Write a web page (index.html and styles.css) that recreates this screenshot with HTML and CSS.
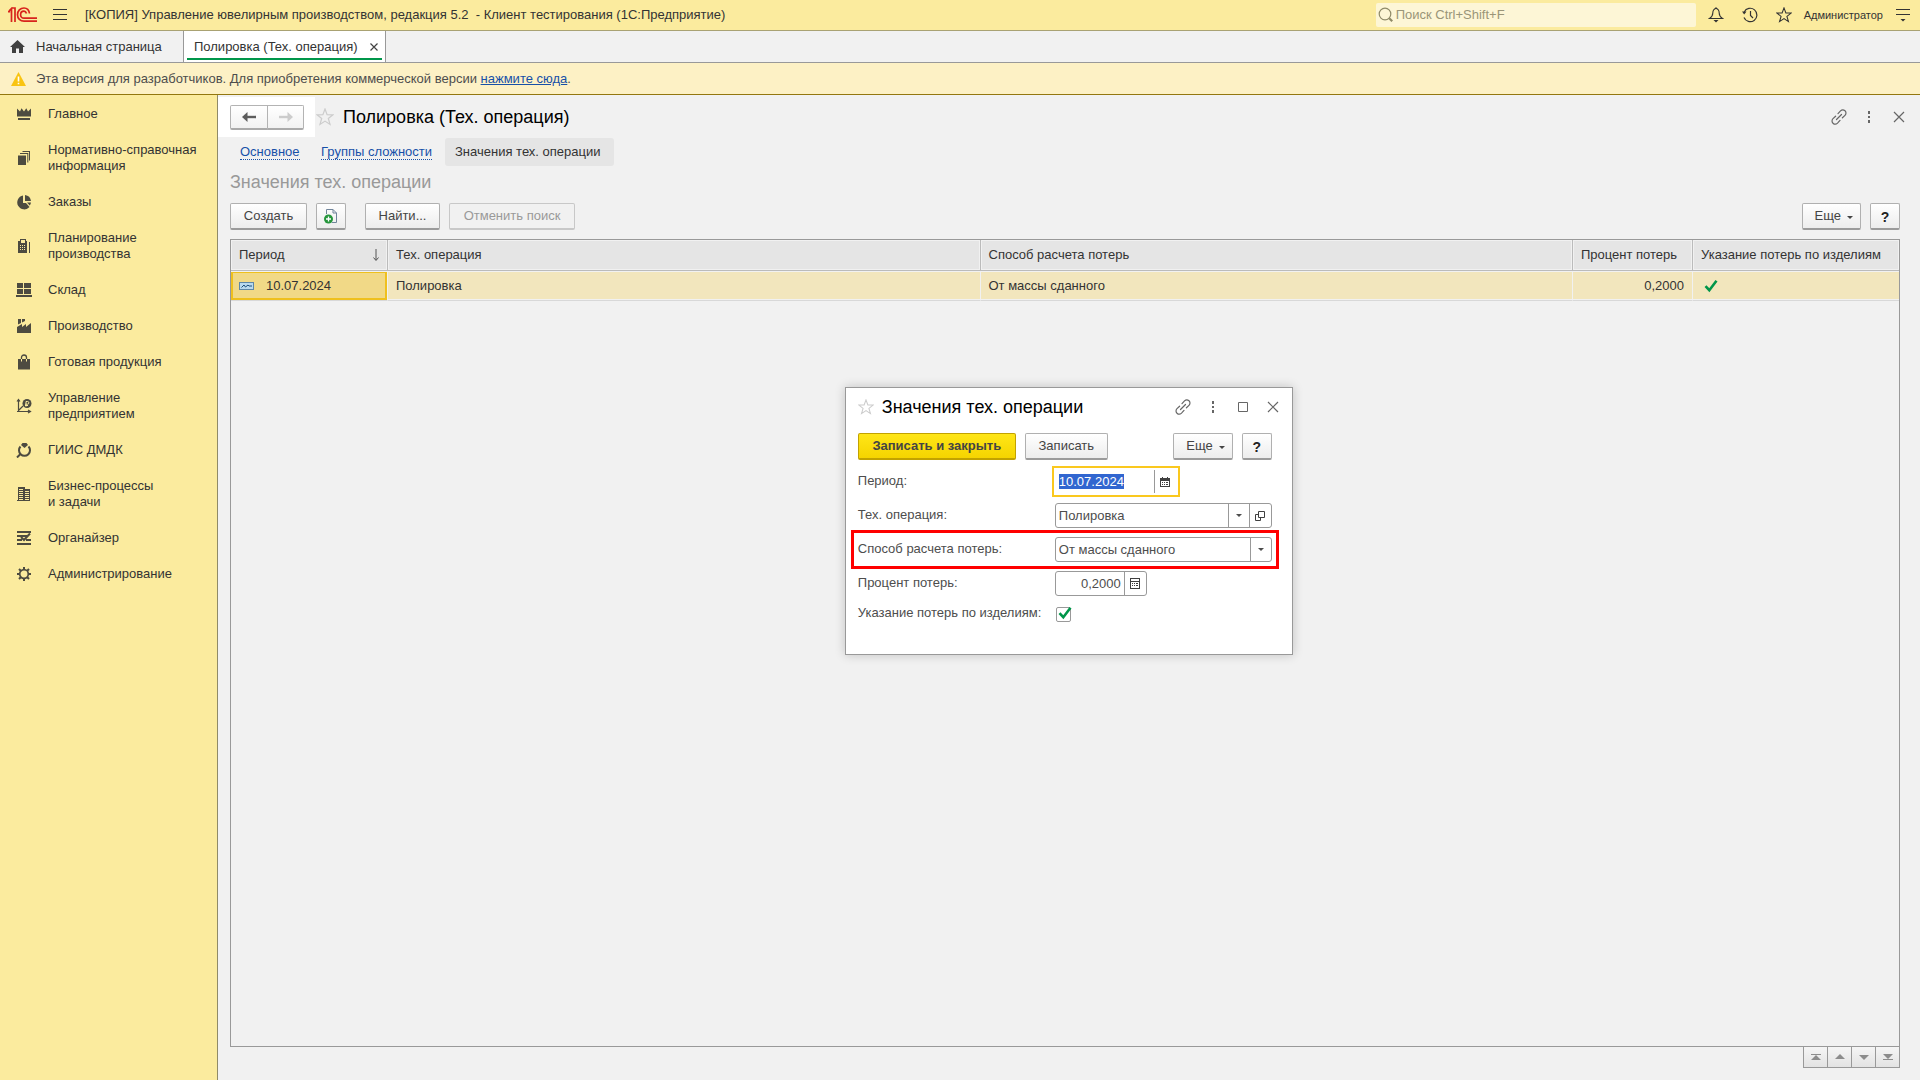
FILE: index.html
```html
<!DOCTYPE html>
<html lang="ru">
<head>
<meta charset="utf-8">
<title>Полировка (Тех. операция)</title>
<link rel="stylesheet" href="styles.css">
</head>
<body>
<svg class="sprite" aria-hidden="true">
  <symbol id="star" viewBox="0 0 18 18"><path d="M9 1l2.1 5.6 5.9.2-4.7 3.7 1.7 5.9L9 13.1 4 16.4l1.700-5.900L1 6.800l5.900-.2z" fill="none" stroke="currentColor" stroke-width="1.200"/></symbol>
  <symbol id="link" viewBox="0 0 16 16"><g fill="none" stroke="currentColor" stroke-width="1.200" stroke-linecap="round"><path d="M5.500 10.500l5-5M7 4.600l2.500-2.700c1.300-1.300 3.200-1.300 4.500-.1s1.300 3.200 0 4.500l-2.600 2.500M9 11.400l-2.500 2.700c-1.300 1.300-3.200 1.300-4.500.1s-1.300-3.200 0-4.500l2.600-2.500"/></g></symbol>
  <symbol id="dots" viewBox="0 0 16 16"><path d="M7 2h2v3H7zM7 7h2v2H7zM7 11h2v3H7z" fill="currentColor"/></symbol>
  <symbol id="cross" viewBox="0 0 16 16"><path d="M3 3l10 10M13 3L3 13" fill="none" stroke="currentColor" stroke-width="1.200"/></symbol>
  <symbol id="caret" viewBox="0 0 6 4"><path d="M0 0h6L3 3z" fill="currentColor"/></symbol>
  <symbol id="check" viewBox="0 0 14 14"><path d="M1.500 7.200l3.800 4L12.500 1.800" fill="none" stroke="#00964a" stroke-width="2.600"/></symbol>
</svg>

<header class="topbar">
  <svg class="logo" viewBox="0 0 30 16" width="30" height="16" aria-label="1С"><g fill="none" stroke="#d8231c" stroke-width="1.700"><path d="M0 4.700h2.200M1.200 3.800L3.500 1.500V15M7 15V1H4"/><path d="M21.500 6.500C21 3 18.800 1 16 1c-3.700 0-6.500 3-6.500 6.700s2.800 6.500 6.500 6.500h13"/><path d="M18.500 6.500C18 5 17.200 4.100 16 4.100c-2 0-3.400 1.600-3.400 3.600S14 11.200 16 11.200h13"/></g></svg>
  <button class="plain menu" aria-label="Меню"><svg viewBox="0 0 14 12" width="14" height="12"><path d="M0 .5h14M0 5.500h14M0 10.500h14" stroke="#333" fill="none"/></svg></button>
  <span class="app-title">[КОПИЯ] Управление ювелирным производством, редакция 5.2 &nbsp;- Клиент тестирования (1С:Предприятие)</span>
  <label class="search"><svg viewBox="0 0 16 16" width="16" height="16"><circle cx="7" cy="7" r="5.800" fill="none" stroke="#8f8a68" stroke-width="1.200"/><path d="M11.200 11.200l3 3" stroke="#8f8a68" stroke-width="2.200"/></svg><input type="search" placeholder="Поиск Ctrl+Shift+F" aria-label="Поиск"></label>
  <div class="tools">
    <button class="plain" aria-label="Уведомления"><svg viewBox="0 0 16 16" width="16" height="16"><path d="M8 1.200C5.800 2 4.800 3.800 4.800 6c0 2.800-1 4-3.300 5.500h13C12.200 10 11.200 8.800 11.200 6c0-2.200-1-4-3.200-4.800z" fill="none" stroke="#333" stroke-width="1.100"/><path d="M8 .3v1.500" stroke="#333"/><path d="M5.500 13h5L8 15.500z" fill="#333"/></svg></button>
    <button class="plain" aria-label="История"><svg viewBox="0 0 16 16" width="16" height="16"><path d="M2.200 5A6.700 6.700 0 1 1 2 10.500M8.500 4v4.500l2.500 2.500" fill="none" stroke="#333" stroke-width="1.200"/><path d="M0 4.500h4.500L2.200 7.500z" fill="#333"/></svg></button>
    <button class="plain" aria-label="Избранное"><svg width="16" height="16"><use href="#star"/></svg></button>
  </div>
  <button class="plain user">Администратор</button>
  <button class="plain" aria-label="Сервис и настройки"><svg viewBox="0 0 14 14" width="14" height="14"><path d="M0 1.500h14M0 6.500h14" stroke="#333"/><path d="M4.500 11h5L7 13.500z" fill="#333"/></svg></button>
</header>

<nav class="tabs" aria-label="Открытые окна">
  <a class="tab home" href="#"><svg viewBox="0 0 15 13" width="15" height="13"><path d="M7.500 0L15 7H13v6H9V8.500H6V13H2V7H0z" fill="#404040"/></svg>Начальная страница</a>
  <div class="tab active"><a href="#">Полировка (Тех. операция)</a><button class="plain" aria-label="Закрыть"><svg viewBox="0 0 8 8" width="8" height="8"><path d="M.5.5l7 7M7.500.5l-7 7" fill="none" stroke="#444" stroke-width="1.200"/></svg></button></div>
</nav>

<div class="notice">
  <svg viewBox="0 0 15 14" width="15" height="14"><path d="M7.500 0L15 14H0z" fill="#f9c412"/><path d="M7.500 4.500v5M7.500 10.700v1.600" stroke="#fff" stroke-width="1.600"/></svg>
  <p>Эта версия для разработчиков. Для приобретения коммерческой версии <a href="#">нажмите сюда</a>.</p>
</div>

<div class="workspace">
  <nav class="sidebar" aria-label="Разделы">
    <a href="#"><svg viewBox="0 0 16 16"><path d="M1 2.500l3 3 1.500-3.200L8 5.500l2.300-3.200L12 5.500l3-3V10.500H1zM2 12h12v2H2z"/></svg>Главное</a>
    <a href="#"><svg viewBox="0 0 16 16"><path d="M2 5.500h8V15H2zM4 3h8.300v9.500h-1V4H4zM6.500 1H14v9.500h-1V2H6.500z"/></svg><span>Нормативно-справочная<br>информация</span></a>
    <a href="#"><svg viewBox="0 0 16 16"><path d="M7 1.500V9h3l3.500 4A7 7 0 1 1 7 1.500zM9 1a7 7 0 0 1 6 6H9zM11 8.500h4a7 7 0 0 1-1.200 3z"/></svg>Заказы</a>
    <a href="#"><svg viewBox="0 0 16 16"><path fill-rule="evenodd" d="M3 3h1V1h6v2h1v12H2V3zM5 2v3h4V2zM4 7v1h1V7zm2 0v1h1V7zm2 0v1h1V7zM4 9v1h1V9zm2 0v1h1V9zm2 0v1h1V9zm-4 2v1h1v-1zm2 0v1h1v-1zm2 0v1h1v-1zM13 4h1v11h-1z"/></svg><span>Планирование<br>производства</span></a>
    <a href="#"><svg viewBox="0 0 16 16"><path d="M1 1h6v5H1zM8 1h7v5H8zM1 7h6v5H1zM8 7h7v5H8zM0 13h16v2H0z"/></svg>Склад</a>
    <a href="#"><svg viewBox="0 0 16 16"><path d="M2 1h3v4L2 6.500zM6 1h3v2L6 4.500zM1 9l5-3v3l4-3v3l5-4v10H1z"/></svg>Производство</a>
    <a href="#"><svg viewBox="0 0 16 16"><path d="M2 5h12v10.500H2z"/><path d="M5.500 8V3.500C5.500 2 6.500 1 8 1s2.500 1 2.500 2.500V8" fill="none" stroke="#4d4b40" stroke-width="1.300"/><path d="M5.500 5v2.500M10.500 5v2.500" stroke="#fbeb9e" stroke-width="1"/></svg>Готовая продукция</a>
    <a href="#"><svg viewBox="0 0 16 16"><path d="M2.500 14V2M1 3.500L2.500 1.500 4 3.500M1 13.500h13M12 12l2.500 1.500L12 15M3 12l4-4" fill="none" stroke="#4d4b40" stroke-width="1.200"/><circle cx="11" cy="5.500" r="4.500"/><path d="M10 8.500V3.500h1.500a1.300 1.300 0 0 1 0 2.700H9M9 7.500h3" stroke="#fbeb9e" fill="none"/></svg><span>Управление<br>предприятием</span></a>
    <a href="#"><svg viewBox="0 0 16 16"><path d="M5 3l1.500-2h4L12 3 8.500 6z"/><path d="M4.500 4.500a5.500 5.500 0 1 0 8 0M4.500 12L1 15.500" fill="none" stroke="#4d4b40" stroke-width="2"/></svg>ГИИС ДМДК</a>
    <a href="#"><svg viewBox="0 0 16 16"><path fill-rule="evenodd" d="M2 1h7v2h5v12H1v-1h1zM3 3v1h4V3zm0 2v1h4V5zm0 2v1h4V7zm0 2v1h4V9zm0 2v1h4v-1zm0 2v1h4v-1zM9 5v1h4V5zm0 2v1h4V7zm0 2v1h4V9zm0 2v1h4v-1zm0 2v1h4v-1z"/></svg><span>Бизнес-процессы<br>и задачи</span></a>
    <a href="#"><svg viewBox="0 0 16 16"><path d="M1 1h14v2H1zM1 5h10v2H1zM1 9h5v2H1zM10 9h5v2h-5zM1 13h14v2H1z"/><path d="M5 7l3 3 6-6.500" fill="none" stroke="#4d4b40" stroke-width="2"/></svg>Органайзер</a>
    <a href="#"><svg viewBox="0 0 16 16"><circle cx="8" cy="8" r="4.300" fill="none" stroke="#4d4b40" stroke-width="1.700"/><path d="M8 1v3M8 12v3M1 8h3M12 8h3M3 3l2 2M11 11l2 2M3 13l2-2M11 5l2-2" stroke="#4d4b40" stroke-width="2"/></svg>Администрирование</a>
  </nav>

  <main class="form">
    <div class="form-head">
      <div class="history">
        <button aria-label="Назад"><svg viewBox="0 0 14 10" width="14" height="10"><path d="M14 5H3" stroke="#5c5c5c" stroke-width="2.400"/><path d="M0 5l5.500-5v10z" fill="#5c5c5c"/></svg></button><button aria-label="Вперед" disabled><svg viewBox="0 0 14 10" width="14" height="10"><path d="M0 5h11" stroke="#ccc" stroke-width="2.400"/><path d="M14 5L8.500 0v10z" fill="#ccc"/></svg></button>
      </div>
      <button class="plain fav" aria-label="В избранное"><svg width="18" height="18"><use href="#star"/></svg></button>
      <h1>Полировка (Тех. операция)</h1>
      <div class="window-tools">
        <button class="plain" aria-label="Ссылка"><svg width="16" height="16"><use href="#link"/></svg></button>
        <button class="plain" aria-label="Действия"><svg width="16" height="16"><use href="#dots"/></svg></button>
        <button class="plain" aria-label="Закрыть"><svg width="16" height="16"><use href="#cross"/></svg></button>
      </div>
    </div>
    <div class="form-body">
      <nav class="sections" aria-label="Навигация формы">
        <a class="w-main" href="#"><span>Основное</span></a><a class="w-groups" href="#"><span>Группы сложности</span></a><a class="current" href="#">Значения тех. операции</a>
      </nav>
      <h2>Значения тех. операции</h2>
      <div class="commands">
        <button class="btn create">Создать</button>
        <button class="btn square" aria-label="Скопировать"><svg viewBox="0 0 16 16" width="16" height="16"><path d="M3.500 6V1.500H10L13.500 5v9.500H9M10 1.500V5h3.500" fill="none" stroke="#70849a"/><circle cx="5.500" cy="11" r="4.500" fill="#26963c"/><path d="M5.500 8.500v5M3 11h5" stroke="#fff" stroke-width="1.300"/></svg></button>
        <button class="btn find">Найти...</button>
        <button class="btn cancel" disabled>Отменить поиск</button>
        <button class="btn more">Еще<svg width="6" height="4"><use href="#caret"/></svg></button>
        <button class="btn square help">?</button>
      </div>
      <div class="list">
        <table>
          <colgroup><col class="c-date"><col><col><col class="c-rate"><col class="c-flag"></colgroup>
          <thead><tr>
            <th><div class="sorted">Период<svg viewBox="0 0 6 12" width="6" height="12"><path d="M3 0v11M.5 8.500L3 11.500l2.500-3" fill="none" stroke="#555"/></svg></div></th>
            <th>Тех. операция</th><th>Способ расчета потерь</th><th>Процент потерь</th><th>Указание потерь по изделиям</th>
          </tr></thead>
          <tbody><tr>
            <td class="cursor"><div class="record"><svg viewBox="0 0 15 8" width="15" height="8"><rect x=".5" y=".5" width="14" height="7" fill="#b9d9ee" stroke="#5e87a8"/><path d="M2.500 5.500L5 3l1.500 2L9 3l1 1h3" fill="none" stroke="#1c4f7c"/></svg>10.07.2024</div></td>
            <td>Полировка</td><td>От массы сданного</td><td class="num">0,2000</td><td><svg class="yes" width="14" height="14" aria-label="Да"><use href="#check"/></svg></td>
          </tr></tbody>
        </table>
      </div>
      <div class="pager">
        <button aria-label="В начало"><svg viewBox="0 0 10 6" width="10" height="6"><path d="M0 0h10v1H0zM5 1l5 5H0z"/></svg></button>
        <button aria-label="Вверх"><svg viewBox="0 0 10 6" width="10" height="6"><path d="M5 0l5 5H0z"/></svg></button>
        <button aria-label="Вниз"><svg viewBox="0 0 10 6" width="10" height="6"><path d="M0 1h10L5 6z"/></svg></button>
        <button aria-label="В конец"><svg viewBox="0 0 10 6" width="10" height="6"><path d="M0 0h10L5 5zM0 5h10v1H0z"/></svg></button>
      </div>
    </div>
  </main>
</div>

<section class="dialog" role="dialog" aria-labelledby="dialog-title">
  <div class="dialog-head">
    <button class="plain fav" aria-label="В избранное"><svg width="16" height="16"><use href="#star"/></svg></button>
    <h2 id="dialog-title">Значения тех. операции</h2>
    <div class="window-tools">
      <button class="plain" aria-label="Ссылка"><svg width="16" height="16"><use href="#link"/></svg></button>
      <button class="plain" aria-label="Действия"><svg width="16" height="16"><use href="#dots"/></svg></button>
      <button class="plain" aria-label="Развернуть"><svg viewBox="0 0 16 16" width="16" height="16"><path d="M3.500 3.500h9v9h-9z" fill="none" stroke="currentColor"/></svg></button>
      <button class="plain" aria-label="Закрыть"><svg width="16" height="16"><use href="#cross"/></svg></button>
    </div>
  </div>
  <div class="commands">
    <button class="btn primary">Записать и закрыть</button>
    <button class="btn save">Записать</button>
    <button class="btn more">Еще<svg width="6" height="4"><use href="#caret"/></svg></button>
    <button class="btn square help">?</button>
  </div>
  <form class="fields">
    <div class="row">
      <label for="period">Период:</label>
      <div class="field date"><input id="period" value="10.07.2024"><button type="button" aria-label="Календарь"><svg viewBox="0 0 10 10" width="10" height="10"><path fill-rule="evenodd" d="M0 1h2V0h1v1h4V0h1v1h2v9H0zM1 4v5h8V4z"/><path d="M2 5h1v1H2zM4 5h1v1H4zM6 5h2v1H6zM2 7h1v1H2zM4 7h1v1H4zM6 7h2v1H6z"/></svg></button></div>
    </div>
    <div class="row">
      <label for="operation">Тех. операция:</label>
      <div class="field"><div class="pick"><select id="operation"><option>Полировка</option></select><svg width="6" height="4"><use href="#caret"/></svg></div><button type="button" aria-label="Открыть"><svg viewBox="0 0 10 10" width="10" height="10"><path d="M3.500.5h6v6h-6zM3.500 3.500h-3v6h5v-3" fill="none" stroke="#404040"/></svg></button></div>
    </div>
    <div class="row marked">
      <label for="method">Способ расчета потерь:</label>
      <div class="field"><div class="pick"><select id="method"><option>От массы сданного</option></select><svg width="6" height="4"><use href="#caret"/></svg></div></div>
    </div>
    <div class="row">
      <label for="rate">Процент потерь:</label>
      <div class="field rate"><input id="rate" value="0,2000"><button type="button" aria-label="Калькулятор"><svg viewBox="0 0 10 11" width="10" height="11"><path fill-rule="evenodd" d="M0 0h10v11H0zM1 1v2h8V1zM1 4v6h8V4z"/><path d="M2 5h1v1H2zM4 5h1v1H4zM6 5h2v1H6zM2 7h1v1H2zM4 7h1v1H4zM6 7h2v1H6z"/></svg></button></div>
    </div>
    <div class="row short">
      <label for="by-item">Указание потерь по изделиям:</label>
      <div class="tick"><input type="checkbox" id="by-item" checked><svg width="14" height="14"><use href="#check"/></svg></div>
    </div>
  </form>
</section>
<script src="app.js"></script>
</body>
</html>
```
FILE: styles.css
```css
* { box-sizing: border-box; }
body {
  margin: 0;
  min-height: 100vh;
  display: flex;
  flex-direction: column;
  position: relative;
  background: #f1f1f1;
  color: #333;
  font: 13px/16px "Liberation Sans", Arial, sans-serif;
}
button, input, select { font: inherit; color: inherit; margin: 0; }
h1, h2, p { margin: 0; }
h1, h2 { font-size: 18px; line-height: 22px; font-weight: 400; color: #000; }
svg { display: block; flex: none; }
.sprite { position: absolute; width: 0; height: 0; }
.plain { display: flex; padding: 0; border: 0; background: none; }

.topbar {
  display: flex;
  align-items: center;
  height: 31px;
  padding: 0 10px 0 8px;
  background: #fbeb9e;
  border-bottom: 1px solid #a9a273;
}
.menu { margin: 0 18px 0 15px; }
.app-title { flex: 1; white-space: nowrap; }
.search {
  display: flex;
  align-items: center;
  width: 320px;
  height: 24px;
  padding: 0 2px;
  border-radius: 2px;
  background: #fdf6d6;
}
.search input { flex: 1; min-width: 0; padding: 0 2px; border: 0; background: none; outline: 0; }
.search input::placeholder { color: #9a9578; opacity: 1; }
.tools { display: flex; gap: 18px; margin: 0 12px; }
.user { font-size: 11px; margin-right: 13px; }

.tabs { display: flex; height: 32px; border-bottom: 1px solid #999; }
.tab { display: flex; align-items: center; color: #333; text-decoration: none; }
.tab a { color: inherit; text-decoration: none; }
.home { gap: 11px; min-width: 183px; padding: 0 10px; }
.active {
  justify-content: space-between;
  min-width: 203px;
  padding: 0 7px 0 10px;
  border: solid #999;
  border-width: 0 1px;
  background: linear-gradient(#00964a, #00964a) 3px 27px / calc(100% - 6px) 2px no-repeat #fff;
}

.notice {
  display: flex;
  align-items: center;
  gap: 10px;
  height: 32px;
  padding: 0 11px;
  background: #fdf1c5;
  border-bottom: 1px solid #93770f;
  color: #4d4d4d;
}
.notice a { color: #1750a8; }

.workspace { display: flex; flex: 1; }
.sidebar { flex: none; width: 218px; padding-top: 1px; background: #fbeb9e; border-right: 1px solid #8f8a68; }
.sidebar a {
  display: flex;
  align-items: center;
  gap: 16px;
  padding: 10px 16px;
  color: #333;
  text-decoration: none;
}
.sidebar svg { width: 16px; height: 16px; fill: #4d4b40; }

.form { display: flex; flex-direction: column; flex: 1; min-width: 0; padding-top: 2px; }
.form-head { display: flex; align-items: center; height: 40px; padding-right: 13px; }
.history { display: flex; align-items: center; height: 40px; padding: 0 11px 0 12px; background: #fff; }
.history button {
  display: grid;
  place-items: center;
  width: 38px;
  height: 25px;
  padding: 0;
  border: 1px solid #b3b3b3;
  border-bottom: 2px solid #aaa;
  border-radius: 2px 0 0 2px;
  background: linear-gradient(#fff, #f2f2f2);
}
.history button + button { width: 37px; margin-left: -1px; border-radius: 0 2px 2px 0; }
.fav { color: #ccc; margin: 0 9px 0 1px; }
.window-tools { display: flex; gap: 14px; margin-left: auto; color: #666; }

.form-body { display: flex; flex-direction: column; flex: 1; padding: 1px 20px 12px 12px; }
.sections { display: flex; }
.sections a { padding: 6px 10px; color: #1750a8; text-decoration: none; }
.sections span { border-bottom: 1px dotted #1750a8; }
.sections .w-main { min-width: 81px; }
.sections .w-groups { min-width: 134px; }
.sections .current { min-width: 169px; color: #333; background: #e5e5e5; border-radius: 3px; }
.form-body h2 { color: #999; margin: 5px 0 10px; }

.commands { display: flex; gap: 9px; }
.btn {
  height: 27px;
  padding: 0 8px;
  border: 1px solid #b0b0b0;
  border-bottom: 2px solid #9b9b9b;
  border-radius: 2px;
  background: linear-gradient(#fff, #ededed);
  color: #444;
  white-space: nowrap;
}
.btn:disabled { color: #999; background: #f1f1f1; border-color: #c8c8c8; }
.square { display: grid; place-items: center; width: 30px; padding: 0; }
.create { min-width: 77px; }
.find { min-width: 75px; margin-left: 10px; }
.cancel { min-width: 126px; }
.save { min-width: 83px; }
.more { display: flex; align-items: center; gap: 6px; margin-left: auto; padding: 0 7px 0 12px; }
.more svg { margin-top: 3px; }
.help { padding-top: 2px; font-size: 14px; font-weight: 700; color: #222; }
.primary { min-width: 158px; background: linear-gradient(#ffe617, #f5d400); border-color: #c2a200; color: #444; font-weight: 700; }

.list { flex: 1; margin-top: 9px; border: 1px solid #999; }
table { width: 100%; table-layout: fixed; border-collapse: separate; border-spacing: 0; }
.c-date { width: 157px; }
.c-rate { width: 120px; }
.c-flag { width: 206px; }
th, td { padding: 0 8px; text-align: left; font-weight: 400; white-space: nowrap; }
th {
  height: 31px;
  background: #e5e5e5;
  border: solid #bbb;
  border-width: 0 1px 1px 0;
  box-shadow: inset 0 0 0 1px #f1f1f1;
}
td {
  height: 30px;
  background: #f2e6bd;
  border: solid #f1f1f1;
  border-width: 0 1px 1px 0;
  border-bottom-color: #d8d8d8;
  box-shadow: inset 0 1px #f1f1f1, inset 0 -1px #f1f1f1;
}
th:last-child, td:last-child { border-right: 0; }
.sorted { display: flex; align-items: center; justify-content: space-between; }
.cursor { background: #f1d987; box-shadow: inset 0 1px #f1f1f1, inset 0 0 0 2px #efc01e; }
.record { display: flex; align-items: center; gap: 12px; }
.num { text-align: right; }
.yes { margin-left: 3px; }

.pager { display: flex; align-self: flex-end; margin-top: -1px; }
.pager button {
  display: grid;
  place-items: center;
  width: 25px;
  height: 22px;
  padding: 0;
  border: 1px solid #999;
  background: linear-gradient(#f5f5f5, #e3e3e3);
  fill: #8c8c8c;
}
.pager button + button { margin-left: -1px; }

.dialog {
  position: absolute;
  left: 44%;
  top: 387px;
  width: 448px;
  padding: 7px 20px 32px 12px;
  border: 1px solid #999;
  background: #fff;
  box-shadow: 0 0 10px rgba(0, 0, 0, .2);
}
.dialog-head { display: flex; align-items: center; height: 23px; margin-right: -9px; }
.dialog-head .fav { margin: 0 8px 0 0; }
.dialog .commands { margin-top: 15px; }
.fields { display: flex; flex-direction: column; gap: 9px; margin-top: 9px; }
.row { display: grid; grid-template-columns: 197px 1fr; align-items: center; height: 25px; color: #4d4d4d; }
.row label { padding-bottom: 2px; }
.short { height: 17px; }
.marked { position: relative; }
.marked::after {
  content: "";
  position: absolute;
  inset: -7px;
  border: 3px solid #f00;
  pointer-events: none;
}
.field { display: flex; height: 25px; border: 1px solid #999; border-radius: 3px; background: #fff; overflow: hidden; }
.field input, .field select {
  flex: 1;
  min-width: 0;
  width: 100%;
  height: 100%;
  padding: 0 3px;
  border: 0;
  outline: 0;
  appearance: none;
  background: none;
}
.field button {
  display: grid;
  place-items: center;
  width: 22px;
  padding: 0;
  border: 0;
  border-left: 1px solid #999;
  background: none;
  fill: #404040;
}
.pick { position: relative; flex: 1; }
.pick::before { content: ""; position: absolute; inset: 0 20px 0 auto; border-left: 1px solid #999; }
.pick svg { position: absolute; right: 7px; top: 10px; pointer-events: none; }
.date { width: 122px; border-color: #fff; box-shadow: 0 0 0 1px #fff, 0 0 0 3px #fac81e; overflow: visible; border-radius: 0; }
.rate { width: 92px; }
.rate input { text-align: right; }
::selection { background: #3166d0; color: #fff; }
.tick { position: relative; }
.tick input { display: block; width: 15px; height: 15px; margin: 0 0 0 1px; appearance: none; border: 1px solid #999; border-radius: 2px; background: #fff; }
.tick svg { position: absolute; left: 3px; top: -1px; pointer-events: none; visibility: hidden; }
.tick input:checked + svg { visibility: visible; }
```
FILE: app.js
```js
const period = document.getElementById("period");
period.focus();
period.select();
```
